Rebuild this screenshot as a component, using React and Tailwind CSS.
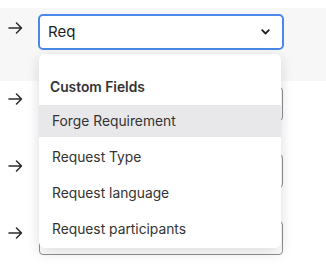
import { useState } from 'react'

function Arrow() {
  return (
    <svg width="15" height="12" viewBox="0 0 15 12" className="shrink-0 text-[#2b2b2b]">
      <path d="M1 6h12.5M8.5 1l5 5-5 5" fill="none" stroke="currentColor" strokeWidth="1.5" strokeLinecap="round" strokeLinejoin="round" />
    </svg>
  )
}

function Chevron() {
  return (
    <svg width="9" height="6" viewBox="0 0 9 6">
      <path d="M1.2 1.2l3.3 3.3 3.3-3.3" fill="none" stroke="#222" strokeWidth="1.8" strokeLinecap="round" strokeLinejoin="round" />
    </svg>
  )
}

export default function App() {
  const [value] = useState('Req')
  const options = ['Forge Requirement', 'Request Type', 'Request language', 'Request participants']

  return (
    <div className="relative w-[326px] h-[275px] bg-white pt-2 overflow-hidden" style={{ fontFamily: 'Inter, "Noto Sans", sans-serif' }}>
      {/* active row */}
      <div className="bg-[#f7f7f7] h-[73px] flex items-start pl-[8px] pt-[6px]">
        <div className="mt-[8px] w-[15px]"><Arrow /></div>
        <div className="ml-[15px] w-[246px] h-[36px] rounded-[5px] border-2 border-[#4a89e8] bg-white flex items-center justify-between pl-[8px] pr-[12px]">
          <span className="text-[15px] text-[#1f1f1f]">{value}</span>
          <Chevron />
        </div>
      </div>

      {/* rows underneath */}
      <div className="flex flex-col gap-[33px] pt-[6px] pl-[8px]">
        {[0, 1, 2].map((i) => (
          <div key={i} className="flex items-start">
            <div className="mt-[6px] w-[15px]"><Arrow /></div>
            <div className="ml-[16px] w-[244px] h-[34px] rounded-[4px] border border-[#8e8e93] bg-white" />
          </div>
        ))}
      </div>

      {/* dropdown menu */}
      <div className="absolute left-[39px] top-[54px] w-[242px] h-[194px] bg-white rounded-[6px] shadow-[0_4px_14px_rgba(0,0,0,0.14)] pt-[17px]">
        <div className="h-[32px] flex items-center px-[11px] text-[13.8px] font-semibold text-[#333]">Custom Fields</div>
        <div className="mt-[2px] flex flex-col gap-[4px]">
          {options.map((o, i) => (
            <div key={o} className={`h-[32px] flex items-center px-[13px] text-[13.8px] text-[#333] ${i === 0 ? 'bg-[#e8e8ea]' : ''}`}>
              {o}
            </div>
          ))}
        </div>
      </div>
    </div>
  )
}
